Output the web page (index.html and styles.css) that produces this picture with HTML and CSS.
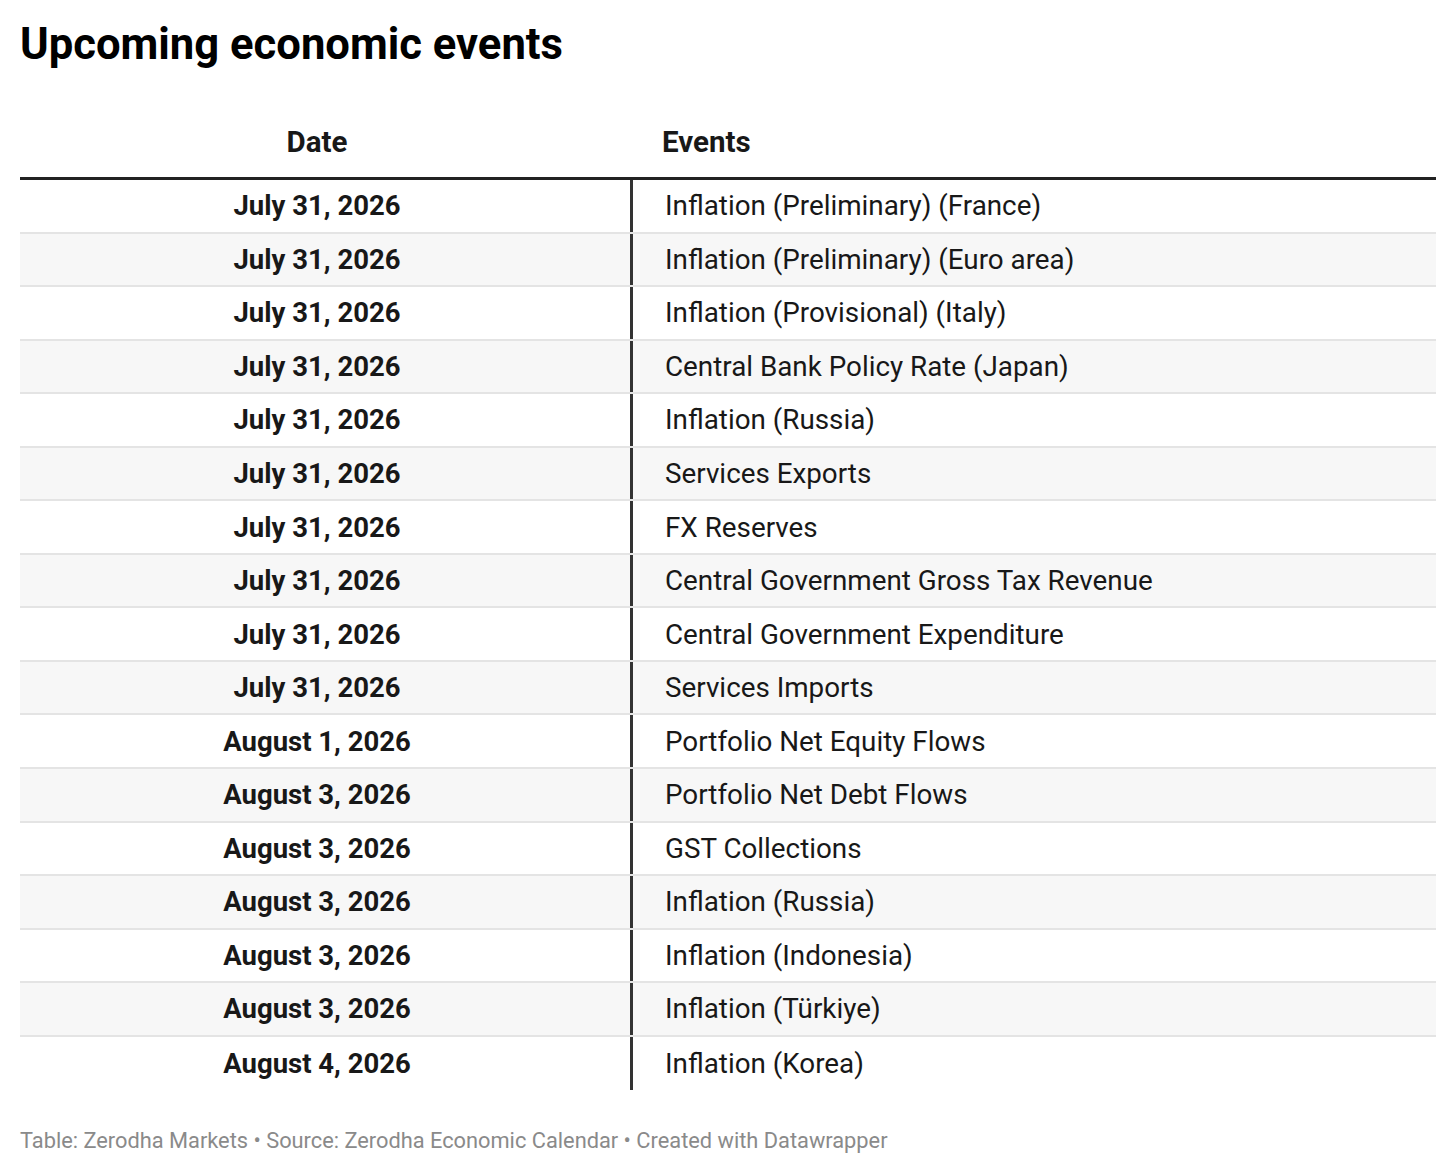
FILE: index.html
```html
<!DOCTYPE html>
<html>
<head>
<meta charset="utf-8">
<link rel="stylesheet" href="styles.css">
</head>
<body>
<div class="page">
  <h1 class="title">Upcoming economic events</h1>
  <div class="table">
    <div class="row head">
      <div class="c-date">Date</div>
      <div class="c-ev">Events</div>
    </div>
    <div class="row"><div class="c-date">July 31, 2026</div><div class="c-ev">Inflation (Preliminary) (France)</div></div>
    <div class="row"><div class="c-date">July 31, 2026</div><div class="c-ev">Inflation (Preliminary) (Euro area)</div></div>
    <div class="row"><div class="c-date">July 31, 2026</div><div class="c-ev">Inflation (Provisional) (Italy)</div></div>
    <div class="row"><div class="c-date">July 31, 2026</div><div class="c-ev">Central Bank Policy Rate (Japan)</div></div>
    <div class="row"><div class="c-date">July 31, 2026</div><div class="c-ev">Inflation (Russia)</div></div>
    <div class="row"><div class="c-date">July 31, 2026</div><div class="c-ev">Services Exports</div></div>
    <div class="row"><div class="c-date">July 31, 2026</div><div class="c-ev">FX Reserves</div></div>
    <div class="row"><div class="c-date">July 31, 2026</div><div class="c-ev">Central Government Gross Tax Revenue</div></div>
    <div class="row"><div class="c-date">July 31, 2026</div><div class="c-ev">Central Government Expenditure</div></div>
    <div class="row"><div class="c-date">July 31, 2026</div><div class="c-ev">Services Imports</div></div>
    <div class="row"><div class="c-date">August 1, 2026</div><div class="c-ev">Portfolio Net Equity Flows</div></div>
    <div class="row"><div class="c-date">August 3, 2026</div><div class="c-ev">Portfolio Net Debt Flows</div></div>
    <div class="row"><div class="c-date">August 3, 2026</div><div class="c-ev">GST Collections</div></div>
    <div class="row"><div class="c-date">August 3, 2026</div><div class="c-ev">Inflation (Russia)</div></div>
    <div class="row"><div class="c-date">August 3, 2026</div><div class="c-ev">Inflation (Indonesia)</div></div>
    <div class="row"><div class="c-date">August 3, 2026</div><div class="c-ev">Inflation (Türkiye)</div></div>
    <div class="row last"><div class="c-date">August 4, 2026</div><div class="c-ev">Inflation (Korea)</div></div>
  </div>
  <div class="footer">Table: Zerodha Markets • Source: Zerodha Economic Calendar • Created with Datawrapper</div>
</div>
</body>
</html>
```
FILE: styles.css
```css
html, body {
  margin: 0;
  padding: 0;
  background: #ffffff;
}
.page {
  padding: 20px 20px 0 20px;
  font-family: Roboto, "Liberation Sans", sans-serif;
  color: #181818;
}
.title {
  margin: 0;
  font-size: 43.6px;
  line-height: 50px;
  font-weight: 700;
  color: #000;
}
.table {
  margin-top: 46px;
  display: flex;
  flex-direction: column;
}
.row {
  display: flex;
  height: 53.55px;
  box-sizing: border-box;
  border-bottom: 2px solid #e4e4e4;
  align-items: center;
  font-size: 27.8px;
}
.row:nth-child(odd) {
  background: #f7f7f7;
}
.row.last {
  border-bottom: none;
}
.row .c-date {
  width: 594px;
  padding-right: 16px;
  align-self: stretch;
  display: flex;
  align-items: center;
  justify-content: center;
  font-weight: 700;
  font-size: 27.5px;
  border-right: 3px solid #333;
}
.row .c-ev {
  padding-left: 32px;
}
.row.head {
  background: #fff;
  height: 64px;
  border-bottom: 3px solid #222;
  font-weight: 700;
  align-items: flex-start;
  font-size: 29.5px;
  padding-top: 9px;
}
.row.head .c-date {
  border-right: 3px solid transparent;
  align-items: flex-start;
  font-size: 29.5px;
}
.row.head .c-ev {
  padding-left: 29px;
  font-weight: 700;
}
.footer {
  margin-top: 38px;
  font-size: 21.8px;
  color: #8a8a8a;
}
```
